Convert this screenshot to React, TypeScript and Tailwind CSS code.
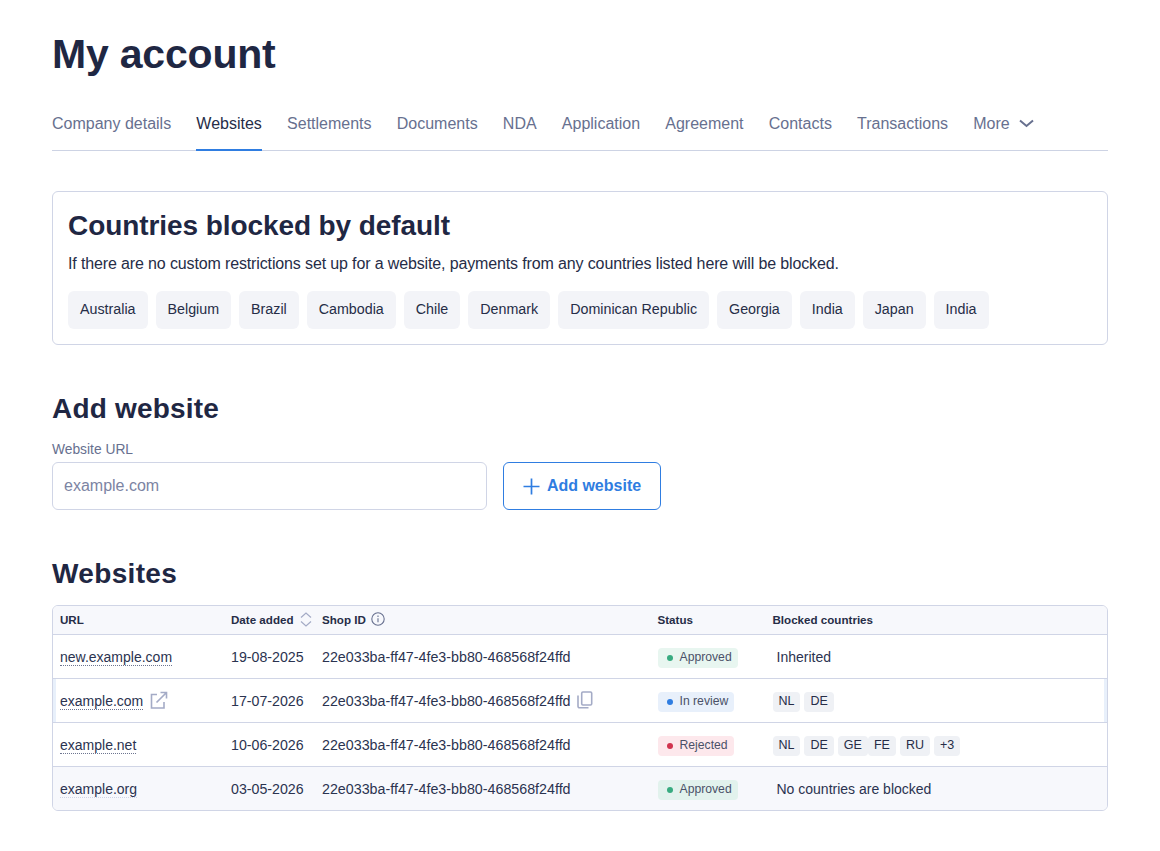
import React from "react";

const tabs = ["Company details", "Websites", "Settlements", "Documents", "NDA", "Application", "Agreement", "Contacts", "Transactions"];
const countries = ["Australia", "Belgium", "Brazil", "Cambodia", "Chile", "Denmark", "Dominican Republic", "Georgia", "India", "Japan", "India"];
const ID = "22e033ba-ff47-4fe3-bb80-468568f24ffd";

function Status({ kind, alt }: { kind: "ok" | "review" | "rej"; alt?: boolean }) {
  const m = {
    ok: { t: "Approved", bg: alt ? "bg-[#e2f2ed]" : "bg-[#e8f6f0]", dot: "bg-[#38ab80]" },
    review: { t: "In review", bg: "bg-[#e8f0fb]", dot: "bg-[#2f7de1]" },
    rej: { t: "Rejected", bg: "bg-[#fde8ec]", dot: "bg-[#d1344f]" },
  }[kind];
  return (
    <span className={`flex h-5 w-fit items-center gap-[7px] rounded-[4px] pl-[9px] pr-[6px] text-[12.2px] text-[#4a5168] ${m.bg}`}>
      <span className={`h-[6px] w-[6px] rounded-full ${m.dot}`} />
      {m.t}
    </span>
  );
}

function Code({ c, cls = "" }: { c: string; cls?: string }) {
  return <span className={`flex h-5 items-center justify-center rounded-[4px] bg-[#eff1f5] px-[6px] text-[12.5px] text-[#262d47] ${cls}`}>{c}</span>;
}

function Row({ url, dotted = true, link, date, copy, status, alt, active, blocked }: any) {
  return (
    <div className={`relative flex h-11 items-center border-t border-[#d0d5e6] pt-[2px] text-[14px] text-[#2b3350] ${alt ? "bg-[#f7f8fc]" : ""}`}>
      {active && <span className="absolute inset-y-0 left-0 w-[3px] bg-[#e8f0fb]" />}
      {active && <span className="absolute inset-y-0 right-0 w-[3px] bg-[#e8f0fb]" />}
      <div className="flex w-[178px] items-center gap-[6px] pl-[7px]">
        <span className={`border-b border-dotted leading-[15px] ${dotted ? "border-[#6d7590]" : "border-[#d0d5e6]"}`}>{url}</span>
        {link && (
          <svg width="19" height="19" viewBox="0 0 19 19" fill="none" stroke="#a4abc6" strokeWidth="1.6" className="-mt-[2px]">
            <path d="M8 3.5H2.5v13.5h12.5v-6" />
            <path d="M7.5 11.5L17 2M11.5 1.5h6v6" />
          </svg>
        )}
      </div>
      <div className="w-[91px] text-[14.2px]">{date}</div>
      <div className="flex w-[335.5px] items-center gap-[6px] text-[14.28px]">
        {ID}
        {copy && (
          <svg width="16" height="18" viewBox="0 0 16 18" fill="none" stroke="#a4abc6" strokeWidth="1.6" className="-mt-[2px]">
            <rect x="4.7" y="1" width="10" height="13" rx="1.2" />
            <path d="M1 4.5v10.7a1.6 1.6 0 0 0 1.6 1.6h8.9" />
          </svg>
        )}
      </div>
      <div className="w-[115px]"><Status kind={status} alt={alt} /></div>
      <div className="flex-1">{blocked}</div>
    </div>
  );
}

export default function App() {
  return (
    <div className="min-h-[851px] bg-white px-[52px] pt-[29px] font-['Liberation_Sans',sans-serif] text-[#1f2743]">
      <h1 className="text-[41px] font-bold leading-[50px] tracking-[-0.2px]">My account</h1>

      <nav className="mt-[20px] flex h-[52px] items-stretch gap-[25.2px] border-b border-[#cdd3e4] text-[16px] text-[#67708f]">
        {tabs.map((t) => (
          <span key={t} className={t === "Websites" ? "-mb-px flex items-center border-b-2 border-[#2f7de1] text-[#262d47]" : "flex items-center pb-px"}>{t}</span>
        ))}
        <span className="flex items-center gap-[9px] pb-px">
          More
          <svg width="15" height="9" viewBox="0 0 15 9" fill="none" stroke="#67708f" strokeWidth="2" className="-mt-[2px]"><path d="M1 1.5l6.5 5.5 6.5-5.5" /></svg>
        </span>
      </nav>

      <section className="mt-10 h-[154px] rounded-[6px] border border-[#d0d5e6] px-[15px] pt-[15px]">
        <h2 className="text-[28px] font-bold leading-[38px] tracking-[-0.08px]">Countries blocked by default</h2>
        <p className="mt-[9px] text-[16px] leading-[20px] tracking-[-0.135px] text-[#262d47]">If there are no custom restrictions set up for a website, payments from any countries listed here will be blocked.</p>
        <div className="mt-[17px] flex gap-2">
          {countries.map((c, i) => (
            <span key={i} className="flex h-[38px] items-center rounded-[6px] bg-[#f3f4f8] px-3 text-[14.27px] text-[#262d47]">{c}</span>
          ))}
        </div>
      </section>

      <h2 className="mt-[45px] text-[28px] font-bold leading-[38px] tracking-[0.2px]">Add website</h2>
      <label className="mt-[13px] block text-[13.8px] leading-[18px] text-[#67708f]">Website URL</label>
      <div className="mt-[3px] flex gap-4">
        <div className="flex h-12 w-[435px] items-center rounded-[6px] border border-[#d0d5e6] px-[11px] text-[16px] text-[#7c84a3]">example.com</div>
        <button className="flex h-12 w-[158px] items-center justify-center gap-[7px] rounded-[6px] border border-[#2f7de1] text-[16px] font-bold text-[#2f7de1]">
          <svg width="17" height="17" viewBox="0 0 17 17" stroke="#2f7de1" strokeWidth="1.7"><path d="M8.5 0.5v16M0.5 8.5h16" /></svg>
          Add website
        </button>
      </div>

      <h2 className="mt-[45px] text-[28px] font-bold leading-[38px] tracking-[0.35px]">Websites</h2>
      <div className="mt-[12px] overflow-hidden rounded-[6px] border border-[#d0d5e6]">
        <div className="flex h-[28px] items-center bg-[#f7f8fc] pb-px text-[11.6px] font-bold text-[#262d47]">
          <div className="w-[178px] pl-[7px]">URL</div>
          <div className="flex w-[91px] items-center gap-[6px]">Date added
            <svg width="12" height="15" viewBox="0 0 12 15" fill="none" stroke="#a4abc6" strokeWidth="1.2"><path d="M1 5.5l5-4.5 5 4.5M1 9.5l5 4.5 5-4.5" /></svg>
          </div>
          <div className="flex w-[335.5px] items-center gap-[5px]">Shop ID
            <svg width="14" height="14" viewBox="0 0 14 14" fill="none" stroke="#67708f" strokeWidth="1.1"><circle cx="7" cy="7" r="6.2" /><path d="M7 6.2v4M7 3.5v1.4" /></svg>
          </div>
          <div className="w-[115px]">Status</div>
          <div>Blocked countries</div>
        </div>
        <Row url="new.example.com" date="19-08-2025" status="ok" blocked={<span className="pl-1">Inherited</span>} />
        <Row url="example.com" link active copy date="17-07-2026" status="review" blocked={<div className="flex gap-1"><Code c="NL" /><Code c="DE" /></div>} />
        <Row url="example.net" date="10-06-2026" status="rej" blocked={
          <div className="flex">
            <Code c="NL" cls="mr-1" /><Code c="DE" cls="mr-1" /><Code c="GE" /><Code c="FE" cls="mr-1" /><Code c="RU" cls="mr-1" /><Code c="+3" />
          </div>
        } />
        <Row url="example.org" dotted={false} alt date="03-05-2026" status="ok" blocked={<span className="pl-1">No countries are blocked</span>} />
      </div>
    </div>
  );
}
